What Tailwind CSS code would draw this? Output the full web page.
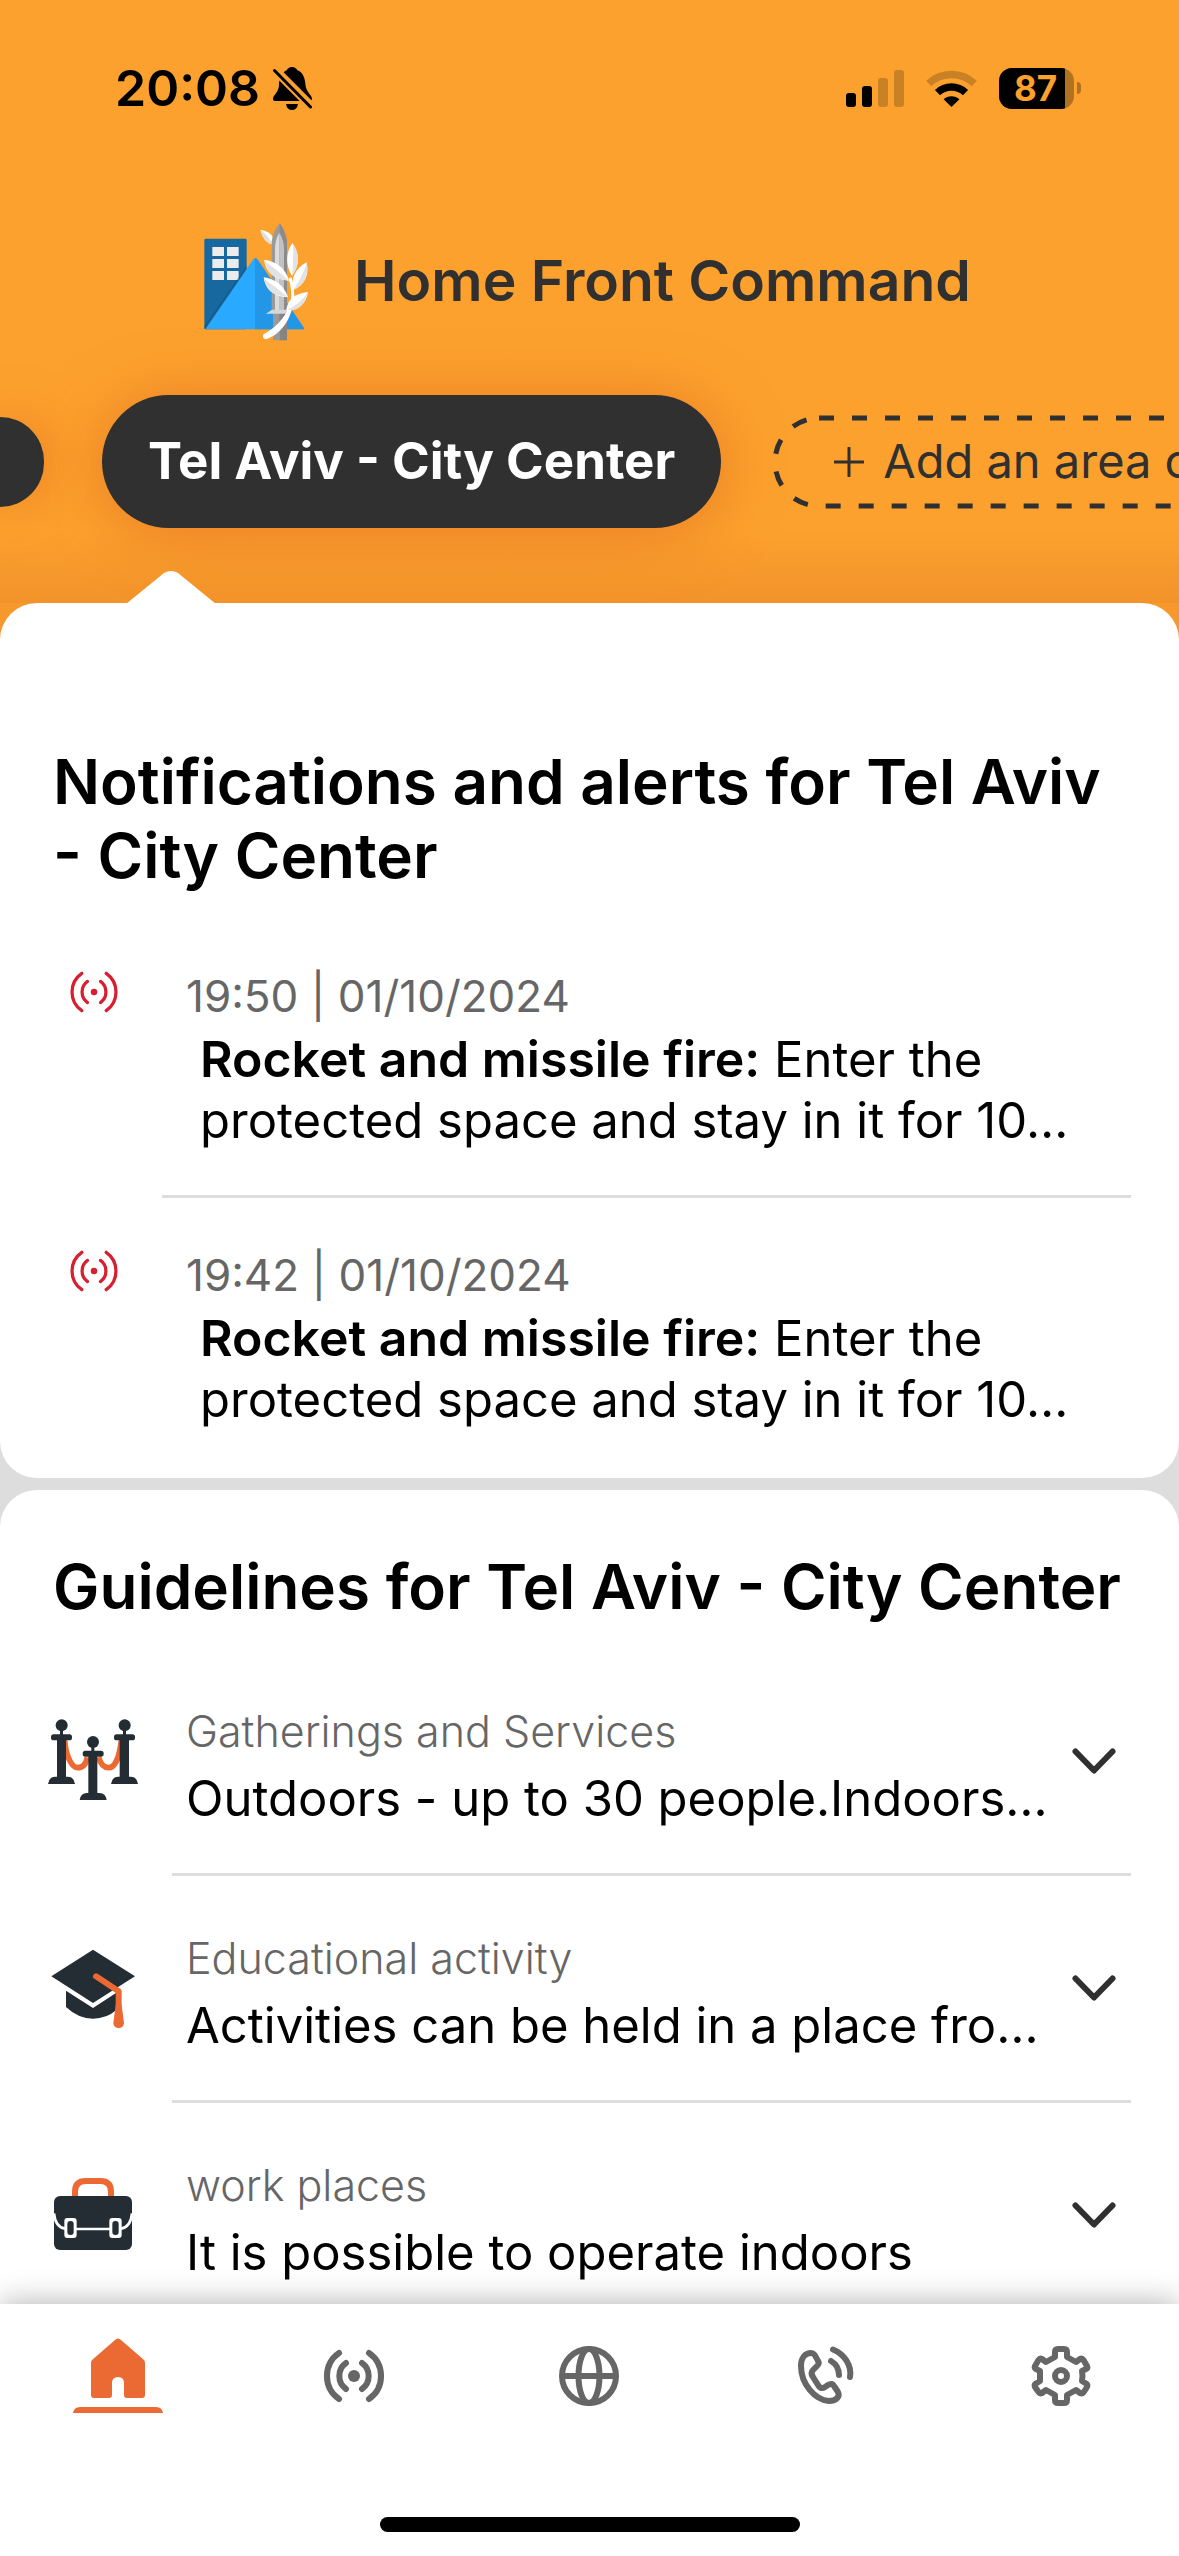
<!DOCTYPE html>
<html lang="en">
<head>
<meta charset="utf-8">
<meta name="viewport" content="width=device-width, initial-scale=1">
<title>Home Front Command</title>
<script src="https://cdn.jsdelivr.net/npm/@tailwindcss/browser@4"></script>
</head>
<body class="flex h-screen flex-col overflow-hidden bg-[#dddddd] font-['Inter',sans-serif] text-black">

<svg class="hidden" aria-hidden="true">
  <symbol id="siren" viewBox="0 0 64 64">
    <path fill="none" stroke="currentColor" stroke-linecap="round" d="M17 9A28 28 0 0 0 17 55M47 9A28 28 0 0 1 47 55M24 19A16 16 0 0 0 24 45M40 19A16 16 0 0 1 40 45"/>
  </symbol>
  <symbol id="chevron" viewBox="0 0 48 32">
    <path fill="none" stroke="#303030" stroke-width="6" stroke-linecap="round" stroke-linejoin="round" d="M5.500 6.500L24 25.500L42.500 6.500"/>
  </symbol>
</svg>

<header class="shrink-0 bg-linear-to-t from-[#f2932b] to-[#fca12e] to-12% pb-[75px]">
  <div class="flex h-[176px] items-center justify-between pr-[98px] pl-[115px]">
    <div class="flex items-center gap-[13px]">
      <time class="text-[50px] font-semibold">20:08</time>
      <svg class="h-[43px] w-[39px]" viewBox="0 0 39 43" role="img" aria-label="Silent">
        <path d="M19 0C22 0 24 2 24 3C30 5 32 11 32.500 18C33 25 39 28 39 32Q39 34 37 34H2Q0 34 0 32C0 28 6 25 6 18C6 11 9 5 14 3C14 2 16 0 19 0ZM13 37H25Q24 43 19 43T13 37Z"/>
        <path d="M-1 0L41 42" stroke="#fca12e" stroke-width="9"/>
        <path d="M1.500 3.500L37.500 40" stroke="#000" stroke-width="3" stroke-linecap="round"/>
      </svg>
    </div>
    <div class="flex items-center gap-[22px]">
      <svg class="h-[37px] w-[58px]" viewBox="0 0 58 37" role="img" aria-label="Signal">
        <rect y="23" width="10" height="14" rx="3"/><rect x="16" y="16" width="10" height="21" rx="3"/>
        <g fill="#c98125"><rect x="32" y="8" width="10" height="29" rx="3"/><rect x="48" width="10" height="37" rx="3"/></g>
      </svg>
      <svg class="h-[37px] w-[51px]" viewBox="0 0 51 37" role="img" aria-label="Wi-Fi">
        <path fill="none" stroke="#c98125" stroke-width="7.500" d="M2.700 13.500A33.300 33.300 0 0 1 48.300 13.500"/>
        <path fill="none" stroke="#000" stroke-width="7.500" d="M11.500 22.600A20.300 20.300 0 0 1 39.500 22.600"/>
        <path d="M25.500 37L17.600 29.300A11.500 11.500 0 0 1 33.400 29.300Z"/>
      </svg>
      <div class="flex items-center gap-[3px]">
        <div class="flex h-[41px] w-[75px] items-center overflow-hidden rounded-[13px] bg-[#b07120]">
          <div class="flex h-full w-[66px] items-center justify-center bg-black pl-[7px] text-[35px] font-bold text-[#fca12e]">87</div>
        </div>
        <div class="h-3 w-1 rounded-r-full bg-[#b07120]"></div>
      </div>
    </div>
  </div>

  <div class="flex h-[210px] items-center justify-center gap-8 pr-4">
    <svg class="size-[130px] shrink-0" viewBox="0 0 390 390" role="img" aria-label="Home Front Command emblem">
      <rect x="37" y="68" width="127" height="272" rx="4" fill="#17689f"/>
      <g fill="#ececee"><path d="M61 93h35v27H61zM105 93h35v27h-35zM61 129h35v27H61zM105 129h35v27h-35zM61 165h35v27H61zM105 165h35v27h-35z"/></g>
      <path fill="#145781" d="M164 150V162L37 340V330Z" opacity=".6"/>
      <path fill="#29a9ff" d="M40 340L184 130Q190 124 196 130L336 336Q337 340 333 340Z"/>
      <path fill="#2397e5" d="M189 126Q193 126 197 131L336 336Q337 340 333 340H189Z"/>
      <path fill="#fff" d="M205 41Q232 46 242 62V86Q215 80 205 41Z"/><path fill="#dedede" d="M205 41Q228 58 242 86Q213 78 205 41Z"/>
      <path fill="#9a9a9a" d="M263 22Q280 44 285 76V290H239V76Q244 44 263 22Z"/>
      <path fill="#8b8b8b" d="M263 22Q280 44 285 76V290H263Z"/>
      <path fill="#dcdcdc" d="M262 50Q249 72 249 100V290H263Z"/><path fill="#c2c2c2" d="M262 50Q276 72 276 100V290H262Z"/>
      <path fill="#9a9a9a" d="M243 290H263V373H243Z"/><path fill="#858585" d="M263 290H285V373H263Z"/>
      <path fill="#d7d7d7" d="M222 293L240 281H300L286 293Z"/>
      <path fill="none" stroke="#fff" stroke-width="9" d="M294 185Q304 215 302 255Q300 275 290 290"/>
      <path fill="#fff" d="M303 255C300 310 265 356 222 370Q213 370 213 360Q213 353 221 351C258 330 288 295 295 255Z"/>
      <g fill="#fff">
        <path d="M216 131C253 136 280 155 291 194C248 190 221 170 216 131Z"/>
        <path d="M215 184C250 189 276 208 288 244C243 242 220 220 215 184Z"/>
        <path d="M301 81C323 112 324 148 300 180C281 148 280 112 301 81Z"/>
        <path d="M344 139C352 178 338 208 303 222C296 184 312 156 344 139Z"/>
        <path d="M348 228C342 265 318 285 283 283C286 250 308 232 348 228Z"/>
      </g>
      <g fill="#e2e2e4">
        <path d="M218 136Q250 158 291 194C248 190 224 172 218 136Z"/>
        <path d="M217 190Q250 212 286 242C243 240 222 222 217 190Z"/>
        <path d="M303 84C323 112 324 148 300 180Q306 130 303 84Z"/>
        <path d="M344 142C350 178 338 208 305 221Q330 185 344 142Z"/>
        <path d="M346 231C340 265 318 285 287 282Q325 262 346 231Z"/>
      </g>
    </svg>
    <h1 class="text-[57px] font-semibold whitespace-nowrap text-[#303030]">Home Front Command</h1>
  </div>

  <div class="flex items-center gap-[52px] overflow-x-clip overflow-y-visible pt-[9px]">
    <button class="mr-1.5 h-[90px] w-11 shrink-0 rounded-r-full bg-[#303030] shadow-[0_0_50px_rgb(220_100_30/0.6)]" aria-label="Previous area"></button>
    <button class="h-[133px] shrink-0 rounded-full bg-[#303030] px-[46px] text-[51px] font-bold whitespace-nowrap text-white shadow-[0_4px_60px_rgb(220_100_30/0.6)]">Tel Aviv - City Center</button>
    <button class="relative flex h-[92px] shrink-0 items-center gap-[19px] pr-16 pl-[61px] text-[47px] whitespace-nowrap text-[#303030]">
      <svg class="absolute inset-0 size-full overflow-visible" aria-hidden="true"><rect x="2" y="2" width="99%" height="88" rx="44" fill="none" stroke="#303030" stroke-width="5" stroke-dasharray="15 18"/></svg>
      <svg class="size-[30px]" viewBox="0 0 30 30" aria-hidden="true"><path d="M15 1V29M1 15H29" stroke="#303030" stroke-width="3" stroke-linecap="round"/></svg>
      Add an area of interest
    </button>
  </div>
</header>

<main class="flex min-h-0 flex-1 flex-col gap-3 overflow-visible bg-[linear-gradient(#f6982c_40px,#dddddd_40px)]">
  <section class="relative shrink-0 rounded-[37px] bg-white pt-[142px] pb-12">
    <svg class="absolute -top-8 left-[126px] h-[33px] w-[90px]" viewBox="0 0 90 33" aria-hidden="true"><path fill="#fff" d="M0 33L38 2Q45 -2 52 2L90 33Z"/></svg>
    <h2 class="px-[53px] text-[62px] leading-[74px] font-semibold whitespace-nowrap">Notifications and alerts for Tel Aviv<br>- City Center</h2>
    <ul class="pt-[71px]">
      <li class="flex items-start">
        <div class="flex h-16 w-[186px] shrink-0 items-center pb-2 pl-[68px] text-[#d71f30]">
          <svg class="size-[52px]" viewBox="0 0 64 64" stroke-width="4" aria-hidden="true"><use href="#siren"/><circle cx="32" cy="32" r="4" fill="currentColor"/></svg>
        </div>
        <div class="whitespace-nowrap">
          <time class="block h-16 text-[44px] leading-[64px] text-[#666666]">19:50 | 01/10/2024</time>
          <p class="pt-px pl-[14px] text-[49px] leading-[61px]"><b class="text-[50px] font-semibold">Rocket and missile fire:</b> Enter the<br>protected space and stay in it for 10…</p>
        </div>
      </li>
      <li class="mt-11 mr-12 mb-[45px] ml-[162px] h-[3px] bg-[#dddddd]" role="separator"></li>
      <li class="flex items-start">
        <div class="flex h-16 w-[186px] shrink-0 items-center pb-2 pl-[68px] text-[#d71f30]">
          <svg class="size-[52px]" viewBox="0 0 64 64" stroke-width="4" aria-hidden="true"><use href="#siren"/><circle cx="32" cy="32" r="4" fill="currentColor"/></svg>
        </div>
        <div class="whitespace-nowrap">
          <time class="block h-16 text-[44px] leading-[64px] text-[#666666]">19:42 | 01/10/2024</time>
          <p class="pt-px pl-[14px] text-[49px] leading-[61px]"><b class="text-[50px] font-semibold">Rocket and missile fire:</b> Enter the<br>protected space and stay in it for 10…</p>
        </div>
      </li>
    </ul>
  </section>

  <section class="shrink-0 rounded-[37px] bg-white pt-[60px] pb-12">
    <h2 class="px-[53px] text-[62px] leading-[74px] font-semibold whitespace-nowrap">Guidelines for Tel Aviv - City Center</h2>
    <div class="pt-[25px]">
      <button class="flex w-full items-center pt-[50px] pr-[61px] pb-[38px] pl-[47px] text-left">
        <svg class="mr-[47px] mb-3 size-[92px] shrink-0" viewBox="51 75 276 276" aria-hidden="true">
          <g fill="none" stroke="#eb6a34" stroke-width="17"><path d="M104 151C108 205 128 233 143 233C158 233 168 222 172 202M206 202C212 225 225 233 236 233C254 233 268 205 274 151"/></g>
          <g fill="#232d33">
            <circle cx="95" cy="106" r="18"/><path d="M90 120H99V135H90ZM81 150H108V262H81Z"/><rect x="63" y="133" width="63" height="18" rx="8"/><path d="M54 282Q57 260 76 260H113Q132 260 135 282Z"/>
            <circle cx="284" cy="106" r="18"/><path d="M279 120H288V135H279ZM269 150H297V262H269Z"/><rect x="252" y="133" width="63" height="18" rx="8"/><path d="M243 282Q246 260 265 260H302Q321 260 324 282Z"/>
            <circle cx="189" cy="156" r="18"/><path d="M184 170H193V184H184ZM175 198H202V310H175Z"/><rect x="158" y="182" width="63" height="18" rx="8"/><path d="M149 330Q152 309 171 309H208Q227 309 230 330Z"/>
          </g>
        </svg>
        <span class="flex-1 whitespace-nowrap">
          <span class="block h-16 text-[43px] leading-[64px] font-light text-[#666666]">Gatherings and Services</span>
          <span class="block h-[72px] text-[49px] leading-[72px]">Outdoors - up to 30 people.Indoors…</span>
        </span>
        <svg class="mb-3 h-8 w-12 shrink-0"><use href="#chevron"/></svg>
      </button>
      <hr class="mr-12 ml-[172px] h-[3px] border-0 bg-[#dddddd]">
      <button class="flex w-full items-center pt-[50px] pr-[61px] pb-[38px] pl-[47px] text-left">
        <svg class="mr-[47px] mb-3 size-[92px] shrink-0" viewBox="51 36 276 276" aria-hidden="true">
          <path fill="#232d33" d="M64 139L189 59L315 139L189 219ZM108 182L189 234L258 189V241Q230 266 189 266Q145 266 108 231Z"/>
          <path fill="none" stroke="#eb6a34" stroke-width="18" stroke-linecap="round" stroke-linejoin="round" d="M198 139L266 184V230"/>
          <path fill="#eb6a34" d="M257 225L250 280A16 14 0 0 0 282 280L275 225Z"/>
        </svg>
        <span class="flex-1 whitespace-nowrap">
          <span class="block h-16 text-[43px] leading-[64px] font-light text-[#666666]">Educational activity</span>
          <span class="block h-[72px] text-[49px] leading-[72px]">Activities can be held in a place fro…</span>
        </span>
        <svg class="mb-3 h-8 w-12 shrink-0"><use href="#chevron"/></svg>
      </button>
      <hr class="mr-12 ml-[172px] h-[3px] border-0 bg-[#dddddd]">
      <button class="flex w-full items-center pt-[50px] pr-[61px] pb-[38px] pl-[47px] text-left">
        <svg class="mr-[47px] mb-3 size-[92px] shrink-0" viewBox="51 717 276 276" aria-hidden="true">
          <path fill="none" stroke="#eb6a34" stroke-width="18" d="M135 800V785Q135 753 167 753H211Q243 753 243 785V800"/>
          <rect x="72" y="798" width="234" height="162" rx="18" fill="#232d33"/>
          <path fill="none" stroke="#fff" stroke-width="8" d="M72 850Q76 892 106 896M306 850Q302 892 272 896M138 897H242"/>
          <g fill="#fff"><rect x="103" y="864" width="37" height="60" rx="9"/><rect x="238" y="864" width="37" height="60" rx="9"/></g>
          <g fill="#232d33"><rect x="112" y="873" width="19" height="42" rx="9"/><rect x="247" y="873" width="19" height="42" rx="9"/></g>
        </svg>
        <span class="flex-1 whitespace-nowrap">
          <span class="block h-16 text-[43px] leading-[64px] font-light text-[#666666]">work places</span>
          <span class="block h-[72px] text-[49px] leading-[72px]">It is possible to operate indoors</span>
        </span>
        <svg class="mb-3 h-8 w-12 shrink-0"><use href="#chevron"/></svg>
      </button>
    </div>
  </section>
</main>

<nav class="relative z-10 shrink-0 bg-white pb-6 shadow-[0_0_30px_rgb(0_0_0/0.32)]">
  <div class="grid h-36 grid-cols-5 place-items-center text-[#666666]">
    <a href="#home" aria-label="Home">
      <svg class="h-[76px] w-[90px]" viewBox="0 0 90 76"><path fill="#eb6a34" d="M42 2Q45 -1 48 2L71 22Q72 23 72 25V57Q72 60 69 60H54Q51 60 51 57V45Q51 39 45 39T39 45V57Q39 60 36 60H21Q18 60 18 57V25Q18 23 19 22ZM0 75Q1 69 7 69H83Q89 69 90 75Z"/></svg>
    </a>
    <a href="#alerts" aria-label="Alerts">
      <svg class="size-16" viewBox="0 0 64 64" stroke-width="6"><use href="#siren"/><circle cx="32" cy="32" r="6" fill="currentColor" stroke="none"/></svg>
    </a>
    <a href="#world" aria-label="World">
      <svg class="size-16" viewBox="0 0 64 64" fill="none" stroke="currentColor" stroke-width="6"><circle cx="32" cy="32" r="27"/><ellipse cx="32" cy="32" rx="10.500" ry="27"/><path d="M5 32H59"/></svg>
    </a>
    <a href="#contact" aria-label="Contact">
      <svg class="size-16" viewBox="0 0 64 64" fill="none" stroke="currentColor" stroke-width="6" stroke-linecap="round" stroke-linejoin="round"><path d="M18 9C21 9 22 11 25 17C27 20 25 21 23 23L20 26C18 28 18 30 20 33L25 41C27 44 29 45 32 43L35 41C38 39 40 40 41 42L45 48C47 52 44 57 36 57C22 56 8 40 8 22C8 14 12 9 18 9ZM40 5.500C51 10 59 21 57 33M38 17C43 20 46 25 46 31"/></svg>
    </a>
    <a href="#settings" aria-label="Settings">
      <svg class="size-16" viewBox="0 0 64 64" fill="none" stroke="currentColor" stroke-width="6" stroke-linejoin="round"><path d="M29 5H35Q38 5 38 8V13L47 18L51 15Q53 14 54.500 16L58 22Q59 24 57 25L53 27Q54 32 53 37L57 39.500Q59 41 58 43L54.500 48.500Q53 50 51 49L47 46L38 51V56Q38 59 35 59H29Q26 59 26 56V51L17 46L13 49Q11 50 9.500 48L6 43Q5 41 7 39.500L11 37V27L7 25Q5 24 6 22L9.500 16Q11 14 13 15L17 18L26 13V8Q26 5 29 5Z"/><circle cx="32" cy="32" r="6"/></svg>
    </a>
  </div>
  <div class="mx-auto mt-[69px] h-[15px] w-[420px] rounded-full bg-black"></div>
</nav>

</body>
</html>
